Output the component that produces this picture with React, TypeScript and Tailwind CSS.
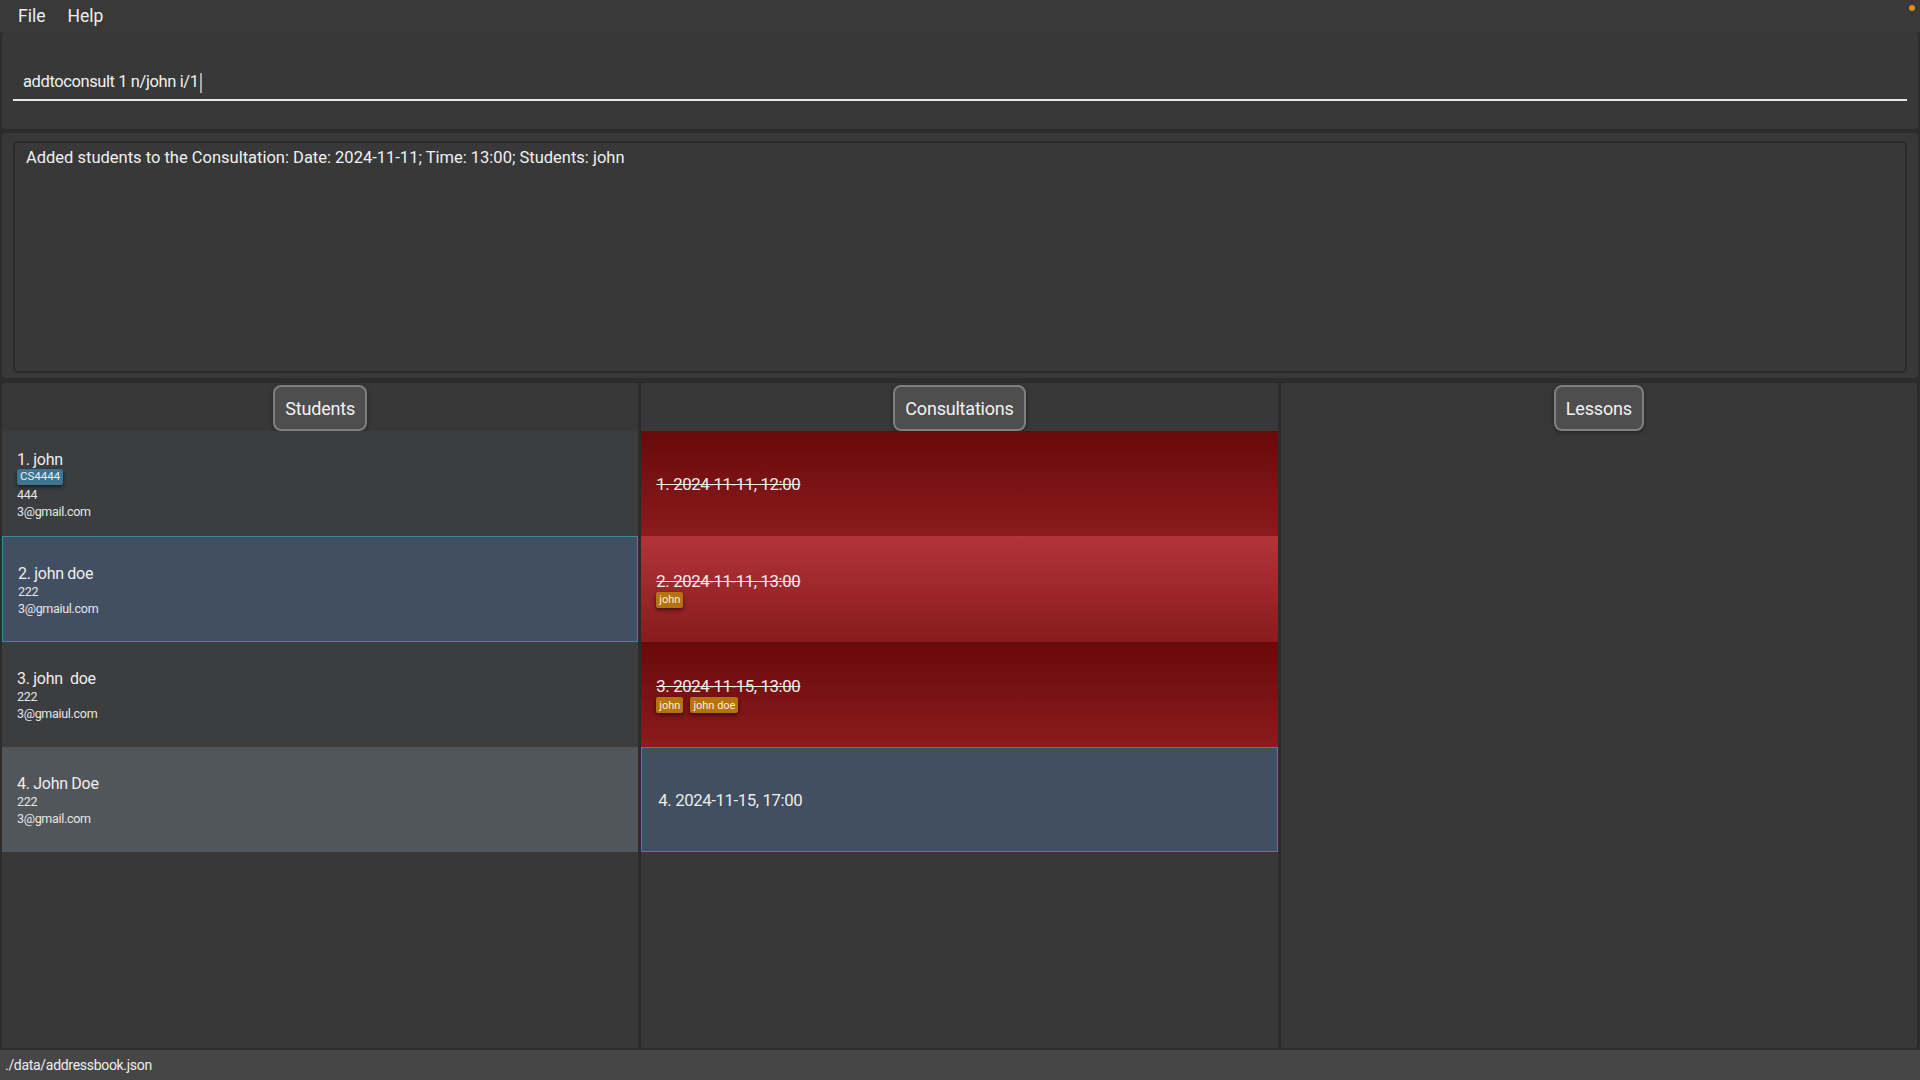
import { ReactNode } from "react";

type Student = {
  name: string;
  phone: string;
  email: string;
  tags?: string[];
  state?: "selected" | "hover";
};

type Consult = {
  label: string;
  students?: string[];
  done?: boolean;
  state?: "selected" | "hover";
};

const students: Student[] = [
  { name: "1. john", phone: "444", email: "3@gmail.com", tags: ["CS4444"] },
  { name: "2. john doe", phone: "222", email: "3@gmaiul.com", state: "selected" },
  { name: "3. john  doe", phone: "222", email: "3@gmaiul.com" },
  { name: "4. John Doe", phone: "222", email: "3@gmail.com", state: "hover" },
];

const consults: Consult[] = [
  { label: "1. 2024-11-11, 12:00", done: true },
  { label: "2. 2024-11-11, 13:00", done: true, students: ["john"], state: "hover" },
  { label: "3. 2024-11-15, 13:00", done: true, students: ["john", "john doe"] },
  { label: "4. 2024-11-15, 17:00", state: "selected" },
];

// row heights follow the list cells in the reference (105/106 alternate)
const rowH = ["h-[105px]", "h-[106px]", "h-[105px]", "h-[105px]"];

function Panel({ title, children }: { title: string; children?: ReactNode }) {
  return (
    <div className="flex-1 bg-[#383838] rounded-[3px] flex flex-col overflow-hidden">
      <div className="h-[48px] flex justify-center pt-[2px] shrink-0">
        <div className="h-[46px] px-[10px] flex items-center rounded-[8px] border-2 border-[#7f7f7f] bg-[#4e4e4e] text-[18px] text-[#f2f2f2] shadow-[0_1px_4px_rgba(0,0,0,0.45)] tracking-[-0.2px]">
          {title}
        </div>
      </div>
      <div className="flex flex-col">{children}</div>
    </div>
  );
}

function Tag({ children, color }: { children: ReactNode; color: "teal" | "amber" }) {
  const bg =
    color === "teal"
      ? "bg-[#3b7590] text-[#e4eef3] text-[11.5px] px-[3px]"
      : "bg-[#b5720f] text-[#fbeede] text-[11px] px-[3px]";
  return (
    <span
      className={`h-[16px] flex items-center rounded-[2px] leading-none whitespace-pre shadow-[0_2px_4px_rgba(0,0,0,0.55)] ${bg}`}
    >
      {children}
    </span>
  );
}

function StudentRow({ s, h }: { s: Student; h: string }) {
  const look =
    s.state === "selected"
      ? "bg-[#424e61] border border-[#3a8aa3] pl-[15px]"
      : s.state === "hover"
        ? "bg-[#51565a] pl-[15px]"
        : "bg-[#3c3d3f] pl-[15px]";
  return (
    <div className={`${h} flex flex-col justify-center pt-[2px] ${look}`}>
      <div className="text-[16px] leading-[19px] text-[#eeeeee] tracking-[-0.3px] whitespace-pre">{s.name}</div>
      {s.tags && (
        <div className="flex gap-[6px] mb-[1px]">
          {s.tags.map((t) => (
            <Tag key={t} color="teal">
              {t}
            </Tag>
          ))}
        </div>
      )}
      <div className="text-[12.5px] leading-[17px] text-[#e6e6e6] tracking-[-0.3px]">{s.phone}</div>
      <div className="text-[12.5px] leading-[17px] text-[#e6e6e6] tracking-[-0.3px]">{s.email}</div>
    </div>
  );
}

function ConsultRow({ c, h }: { c: Consult; h: string }) {
  const look =
    c.state === "selected"
      ? "bg-[#424e61] border border-[#3a8aa3] pl-[16px]"
      : c.state === "hover"
        ? "bg-gradient-to-b from-[#b23439] to-[#881b1d] pl-[15px]"
        : "bg-gradient-to-b from-[#68090a] to-[#8c1b1d] pl-[15px]";
  const pad = c.students ? "pt-[2px]" : "pt-0";
  return (
    <div className={`${h} flex flex-col justify-center ${pad} ${look}`}>
      <div
        className={`text-[16.8px] leading-[20px] text-[#ececec] tracking-[-0.4px] ${c.done ? "line-through" : ""}`}
      >
        {c.label}
      </div>
      {c.students && (
        <div className="flex gap-[7px] mt-[1px] mb-[2px]">
          {c.students.map((t) => (
            <Tag key={t} color="amber">
              {t}
            </Tag>
          ))}
        </div>
      )}
    </div>
  );
}

export default function App() {
  return (
    <div className="relative w-[1920px] h-[1080px] bg-[#2c2c2c] flex flex-col font-['Roboto','Liberation_Sans',sans-serif] text-white overflow-hidden">
      <div className="h-[32px] bg-[#393939] flex items-center pl-[18px] gap-[22px] text-[17.5px] text-[#eeeeee] shrink-0">
        <span>File</span>
        <span>Help</span>
      </div>
      <span className="absolute right-[5px] top-[5px] w-[6px] h-[6px] rounded-full bg-[#e08a1e]" />

      <div className="mx-[2px] h-[97px] bg-[#383838] rounded-[4px] flex flex-col justify-center px-[11px] shrink-0">
        <div className="mt-[3px] border-b-2 border-[#e8e8e8] h-[37px] flex items-center pl-[10px]">
          <span className="text-[16.5px] text-[#f0f0f0] tracking-[-0.4px] pt-[3px]">addtoconsult 1 n/john i/1</span>
          <span className="inline-block w-[2px] h-[20px] bg-[#a8a8a8] ml-[1px] mt-[3px]" />
        </div>
      </div>

      <div className="mt-[4px] mx-[2px] h-[245px] bg-[#383838] rounded-[4px] pt-[8px] pb-[5px] px-[11px] flex shrink-0">
        <div className="flex-1 border-2 border-[#2a2a2a] rounded-[5px] pl-[11px] pt-[5px]">
          <div className="text-[16.5px] leading-[20px] text-[#f0f0f0]">
            Added students to the Consultation: Date: 2024-11-11; Time: 13:00; Students: john
          </div>
        </div>
      </div>

      <div className="mt-[5px] h-[665px] flex gap-[3px] pl-[2px] pr-[3px] shrink-0">
        <Panel title="Students">
          {students.map((s, i) => (
            <StudentRow key={s.name} s={s} h={rowH[i]} />
          ))}
        </Panel>
        <Panel title="Consultations">
          {consults.map((c, i) => (
            <ConsultRow key={c.label} c={c} h={rowH[i]} />
          ))}
        </Panel>
        <Panel title="Lessons" />
      </div>

      <div className="mt-[2px] flex-1 bg-[#464646] flex items-center pl-[5px] text-[14px] text-[#eeeeee] tracking-[-0.3px]">
        ./data/addressbook.json
      </div>
    </div>
  );
}
